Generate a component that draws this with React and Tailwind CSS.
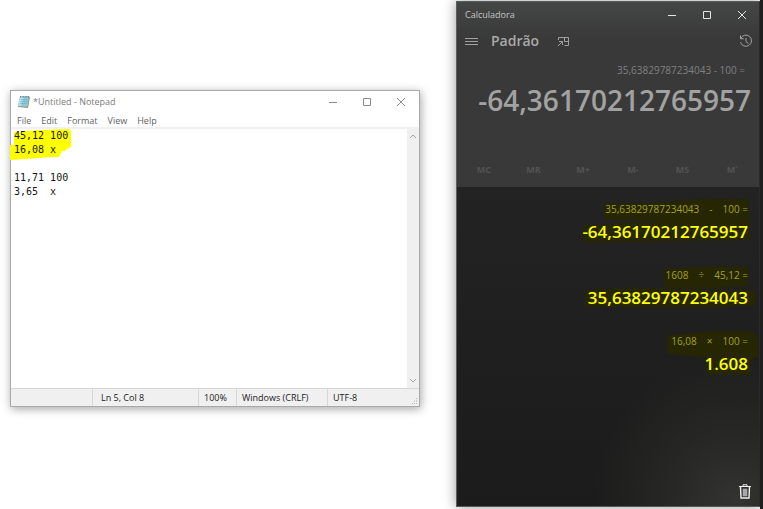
import React from "react";

const NOTE = "45,12 100\n16,08 x\n\n11,71 100\n3,65  x";

const HISTORY = [
  {
    left: "35,63829787234043",
    op: "-",
    right: "100",
    result: "-64,36170212765957",
    marks: [
      "M37 5 L90 4 L125 1 L150 0 L180 1 L181 23 L150 24 L110 23 L74 21 L36 20 Z",
      "M16 27 L60 24 L180 23 L182 40 L150 41 L16 43 Z",
    ],
  },
  {
    left: "1608",
    op: "÷",
    right: "45,12",
    result: "35,63829787234043",
    marks: [
      "M96 5 L140 2 L178 2 L180 5 L179 20 L150 22 L97 22 Z",
      "M17 26 L60 23 L188 26 L186 40 L130 42 L17 41 Z",
    ],
  },
  {
    left: "16,08",
    op: "×",
    right: "100",
    result: "1.608",
    marks: [
      "M100 5 L130 2 L170 0 L186 2 L190 7 L189 26 L172 31 L130 25 L100 22 Z",
      "M140 27 L182 27 L182 43 L139 43 Z",
    ],
  },
];

function Stroke({ d, className, box = "0 0 10 10" }) {
  return (
    <svg viewBox={box} className={className} fill="none" stroke="currentColor" aria-hidden="true">
      <path d={d} />
    </svg>
  );
}

const MINIMIZE = "M1 5.5H9";
const MAXIMIZE = "M1.5 1.5H8.5V8.5H1.5Z";
const CLOSE = "M1 1L9 9M9 1L1 9";

function NotepadIcon() {
  return (
    <svg viewBox="0 0 14 14" className="size-[14px]" aria-hidden="true">
      <path d="M3 2L12 1.5L13 2.5L11 13L1 12Z" fill="#9b9078" />
      <path d="M3 2L12 2L10.3 11.8L1 11Z" fill="#8ccbdc" />
      <path d="M3 2L7 2L4 11.3L1 11Z" fill="#b4e0ea" />
      <path d="M4 4.5H10.5M3.6 6.5H10.2M3.2 8.5H9.8" stroke="#5fa9bd" strokeWidth=".6" />
      <path d="M3 1.8H12" stroke="#62808a" strokeWidth="1.4" strokeDasharray="1 .6" />
    </svg>
  );
}

function Notepad() {
  return (
    <section className="mt-[90px] mr-9 ml-[10px] flex h-[317px] flex-col self-start border border-[#a9a9a9] bg-white text-[#5f5f5f] shadow-[1px_2px_9px_rgba(0,0,0,0.35)]">
      <header className="flex h-[22px] items-center pl-1.5">
        <NotepadIcon />
        <h1 className="ml-0.5 flex-1 text-[9px] text-[#7d7d7d]">*Untitled - Notepad</h1>
        <div className="flex pr-px text-[#8c8c8c]">
          {[
            ["Minimize", MINIMIZE],
            ["Maximize", MAXIMIZE],
            ["Close", CLOSE],
          ].map(([label, d]) => (
            <button key={label} aria-label={label} className="flex h-5 w-[34px] items-center justify-center">
              <Stroke d={d} className="size-[10px]" />
            </button>
          ))}
        </div>
      </header>
      <nav className="flex h-4 items-end gap-[10px] border-b-2 border-[#f0f0f0] pl-1.5 text-[9px] leading-[13px]">
        {["File", "Edit", "Format", "View", "Help"].map((m) => (
          <button key={m}>{m}</button>
        ))}
      </nav>
      <div className="flex min-h-0 flex-1">
        <div className="relative flex-1">
          <svg viewBox="0 0 64 34" className="absolute top-0 -left-px h-[34px] w-16" aria-hidden="true">
            <path
              d="M4 3L30 1L59 0L61 2V18L57 20L55 22L52 22L49 28L41 28L30 29L0 31V16L4 16Z"
              fill="#ffff00"
            />
          </svg>
          <textarea
            aria-label="Text editor"
            defaultValue={NOTE}
            spellCheck={false}
            className="relative block h-full w-full resize-none overflow-hidden bg-transparent pl-[3px] font-['DejaVu_Sans_Mono',monospace] text-[10px] leading-[14px] text-[#161616] outline-none"
          />
        </div>
        <div className="flex w-3 flex-col items-center justify-between bg-[#f0f0f0] py-1 text-[#a3a3a3]">
          <button aria-label="Scroll up" className="flex">
            <Stroke d="M1 5L4 2L7 5" box="0 0 8 7" className="h-[7px] w-2" />
          </button>
          <button aria-label="Scroll down" className="flex">
            <Stroke d="M1 2L4 5L7 2" box="0 0 8 7" className="h-[7px] w-2" />
          </button>
        </div>
      </div>
      <footer className="flex h-[18px] items-stretch border-t border-[#d7d7d7] bg-[#f0f0f0] text-[9px] leading-[17px] text-[#222]">
        <span className="flex-1 border-r border-[#d7d7d7]" />
        <span className="w-[106px] border-r border-[#d7d7d7] pl-2">Ln 5, Col 8</span>
        <span className="w-[38px] border-r border-[#d7d7d7] pl-[5px]">100%</span>
        <span className="w-[91px] border-r border-[#d7d7d7] pl-[5px]">Windows (CRLF)</span>
        <span className="w-[83px] pl-[5px]">UTF-8</span>
        <svg viewBox="0 0 8 8" className="size-2 self-end" fill="#b5b5b5" aria-hidden="true">
          <path d="M5 0h1v1h-1zM3 2.5h1v1h-1zM5 2.5h1v1h-1zM1 5h1v1h-1zM3 5h1v1h-1zM5 5h1v1h-1z" />
        </svg>
      </footer>
    </section>
  );
}

function Calculator() {
  return (
    <section className="mt-px flex h-[506px] flex-1 flex-col border border-t-[#5a5c5a] border-r-[#2a2a2a] border-b-[#5c5858] border-l-[#5e5e5e] bg-[#1e1e1e] shadow-[0_0_12px_rgba(0,0,0,0.4)]">
      <div className="flex h-[185px] flex-col bg-linear-to-b from-[#454646] via-[#393939] via-20% to-[#393939] text-[#a0a0a0]">
        <header className="flex h-[25px] items-center pl-2">
          <h2 className="flex-1 text-[9px] text-[#c4c4c4]">Calculadora</h2>
          <div className="flex text-[#e4e4e4]">
            {[
              ["Minimizar", MINIMIZE],
              ["Maximizar", MAXIMIZE],
              ["Fechar", CLOSE],
            ].map(([label, d]) => (
              <button key={label} aria-label={label} className="flex h-6 w-[35px] items-center justify-center">
                <Stroke d={d} className="size-[10px]" />
              </button>
            ))}
          </div>
        </header>
        <div className="flex h-7 items-center pr-1.5 pl-2">
          <button aria-label="Menu" className="flex">
            <Stroke d="M0 1.5H13M0 4.5H13M0 7.5H13" box="0 0 13 9" className="h-[9px] w-[13px]" />
          </button>
          <h3 className="ml-[13px] text-[14px] leading-5 font-semibold text-[#aaaaaa]">Padrão</h3>
          <button aria-label="Manter na parte superior" className="ml-[18px] flex">
            <Stroke
              d="M1.5 4V1.5H11.5V9.5H7.5M7.5 1.5V5.5H11.5M1 10L5 6M2 5.5H5.5V9"
              box="0 0 13 11"
              className="h-[11px] w-[13px]"
            />
          </button>
          <button aria-label="Histórico" className="ml-auto flex">
            <Stroke
              d="M1.5 1.5V4.8H4.8M1.7 4.6A5.6 5.6 0 1 1 1.5 8.2M7 4V7.5L9.5 9.5"
              box="0 0 14 14"
              className="size-[14px]"
            />
          </button>
        </div>
        <p className="mt-2 pr-[14px] text-right text-[10px] leading-[14px] text-[#808080]">
          35,63829787234043 - 100 =
        </p>
        <p className="pr-2 text-right text-[28px] leading-[46px] font-semibold text-[#a2a2a2]">
          -64,36170212765957
        </p>
        <div className="mt-auto grid h-[34px] grid-cols-6 px-0.5 text-[9px] font-bold text-[#535353]">
          {["MC", "MR", "M+", "M-", "MS", "M˅"].map((m) => (
            <button key={m} disabled>
              {m}
            </button>
          ))}
        </div>
      </div>
      <div className="flex flex-1 flex-col bg-[radial-gradient(circle_at_92%_98%,#333430_0%,#282926_14%,transparent_34%),linear-gradient(#232323,#1b1b1b)] pt-[13px] pr-[11px]">
        <ul>
          {HISTORY.map((h) => (
            <li key={h.result} className="relative h-[66px] text-right">
              <svg viewBox="0 0 190 46" className="absolute -top-px -right-[10px] h-[46px] w-[190px]" aria-hidden="true">
                {h.marks.map((d) => (
                  <path key={d} d={d} fill="#262602" stroke="#262602" strokeWidth="1" strokeLinejoin="round" />
                ))}
              </svg>
              <p className="relative flex justify-end pt-0.5 text-[10px] leading-[14px] text-[#a3a31c]">
                <span>{h.left}</span>
                <span className="mx-[10px]">{h.op}</span>
                <span>{h.right} =</span>
              </p>
              <p className="relative pt-[5px] text-[17px] leading-[22px] font-semibold text-[#ffff0c]">{h.result}</p>
            </li>
          ))}
        </ul>
        <button aria-label="Limpar histórico" className="mt-auto mb-[7px] -mr-[3px] self-end text-[#f0f0f0]">
          <svg viewBox="0 0 12 15" className="h-[15px] w-3" fill="none" stroke="currentColor" aria-hidden="true">
            <path d="M0 2.5H12M4 2.5V.8H8V2.5" />
            <path d="M1.5 2.5L2 14H10L10.5 2.5" strokeWidth="1.4" />
            <path d="M4 5H8V12H4Z" fill="#a8a8a8" stroke="#a8a8a8" strokeWidth=".6" />
          </svg>
        </button>
      </div>
    </section>
  );
}

export default function App() {
  return (
    <main className="grid min-h-[509px] grid-cols-[minmax(0,1fr)_307px] overflow-hidden bg-white font-['Open_Sans','Noto_Sans',sans-serif]">
      <Notepad />
      <div className="flex">
        <Calculator />
        <div className="w-[3px] bg-[#1f1f1f]" />
      </div>
    </main>
  );
}
